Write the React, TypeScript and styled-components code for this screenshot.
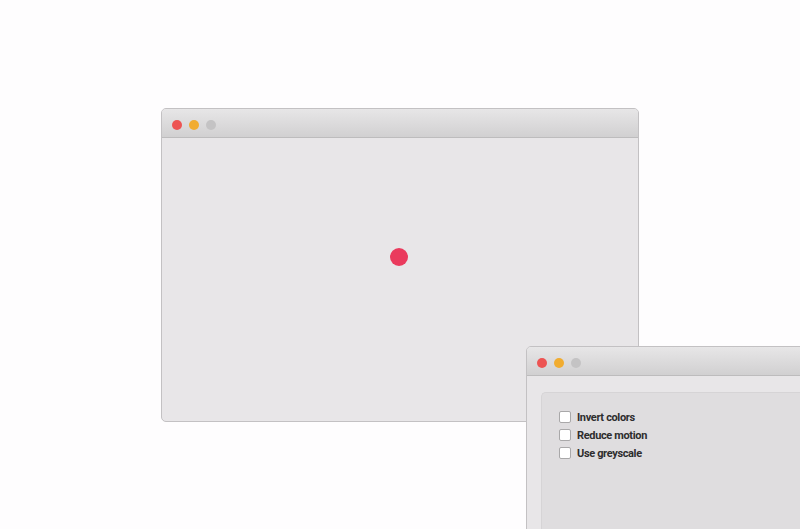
import React from "react";
import styled, { createGlobalStyle } from "styled-components";

const Global = createGlobalStyle`
  html, body { margin: 0; padding: 0; background: #fefdfe; overflow: hidden; }
  body { width: 800px; height: 529px; font-family: Roboto, "Liberation Sans", Arial, sans-serif; }
`;

const Desktop = styled.div`
  position: relative;
  width: 800px;
  height: 529px;
  overflow: hidden;
  background: #fefdfe;
`;

const Window = styled.div<{ $x: number; $y: number; $w: number; $h: number }>`
  position: absolute;
  left: ${(p) => p.$x}px;
  top: ${(p) => p.$y}px;
  width: ${(p) => p.$w}px;
  height: ${(p) => p.$h}px;
  box-sizing: border-box;
  border: 1px solid #c3c1c3;
  border-radius: 5px;
  background: #e8e6e8;
  display: flex;
  flex-direction: column;
  overflow: hidden;
`;

const TitleBar = styled.div`
  flex: 0 0 auto;
  height: 29px;
  box-sizing: border-box;
  background: linear-gradient(#e7e6e7, #d1d0d1);
  border-bottom: 1px solid #bdbcbd;
  display: flex;
  align-items: center;
  gap: 7px;
  padding: 3px 0 0 10px;
`;

const Light = styled.span<{ $c: string }>`
  width: 10px;
  height: 10px;
  border-radius: 50%;
  background: ${(p) => p.$c};
`;

const Body = styled.div`
  flex: 1;
  display: flex;
  align-items: center;
  justify-content: center;
  padding-bottom: 46px;
`;

const Dot = styled.div`
  width: 18px;
  height: 18px;
  border-radius: 50%;
  background: #ea3a5d;
  margin-right: 2px;
`;

const SettingsBody = styled.div`
  flex: 1;
  padding: 16px 0 0 14px;
  display: flex;
`;

const Panel = styled.div`
  flex: 1;
  background: #dfdddf;
  border: 1px solid #d6d4d6;
  border-right: none;
  border-bottom: none;
  border-radius: 5px 0 0 0;
  padding: 18px 0 0 17px;
  display: flex;
  flex-direction: column;
  gap: 6px;
`;

const Row = styled.label`
  display: flex;
  align-items: center;
  gap: 6px;
  font-family: Roboto, "Liberation Sans", Arial, sans-serif;
  font-size: 11px;
  font-weight: 700;
  letter-spacing: -0.35px;
  color: #2e2d2e;
  height: 12px;
`;

const Box = styled.span`
  width: 10px;
  height: 10px;
  background: #ffffff;
  border: 1px solid #a9a8a9;
  border-radius: 2px;
`;

const Lights = () => (
  <TitleBar>
    <Light $c="#ed5453" />
    <Light $c="#f1ac30" />
    <Light $c="#c4c3c4" />
  </TitleBar>
);

export default function App() {
  return (
    <>
      <Global />
      <Desktop>
        <Window $x={161} $y={108} $w={478} $h={314}>
          <Lights />
          <Body>
            <Dot />
          </Body>
        </Window>
        <Window $x={526} $y={346} $w={300} $h={220}>
          <Lights />
          <SettingsBody>
            <Panel>
              <Row><Box />Invert colors</Row>
              <Row><Box />Reduce motion</Row>
              <Row><Box />Use greyscale</Row>
            </Panel>
          </SettingsBody>
        </Window>
      </Desktop>
    </>
  );
}
